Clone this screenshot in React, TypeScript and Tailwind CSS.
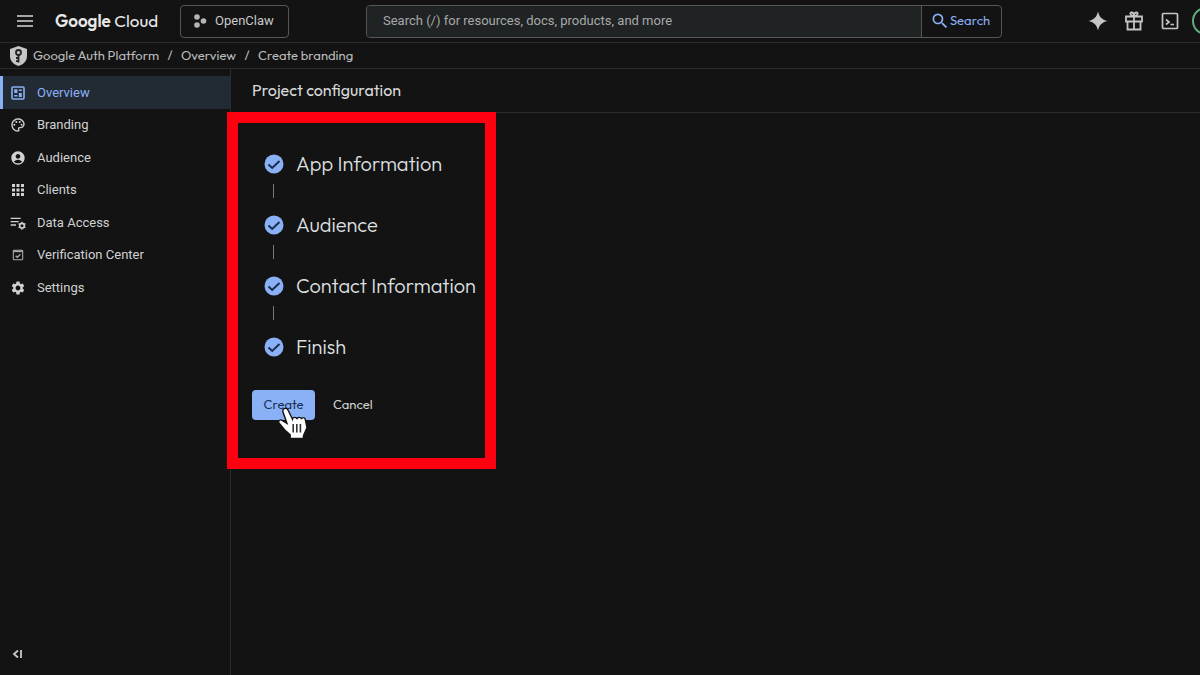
import type { ReactNode } from "react";
import {
  MdOutlinePalette,
  MdAccountCircle,
  MdApps,
  MdSettings,
  MdSearch,
} from "react-icons/md";

interface NavItem {
  label: string;
  icon: ReactNode;
}

const OverviewIcon = () => (
  <svg width="14" height="14" viewBox="0 0 14 14" fill="none" stroke="currentColor">
    <rect x="1" y="1" width="12" height="12" rx="1" strokeWidth="1.600" />
    <path d="M3.200 5.200h3.200M3.200 4h3.200M3.200 6.400h3.200M3.200 9.800h3.200M7.800 4.200h3M7.800 7.800h3M7.800 9.200h3M7.800 10.200h3" strokeWidth="1.400" />
  </svg>
);

const DataAccessIcon = () => (
  <svg width="16" height="16" viewBox="0 0 24 24" fill="none" stroke="currentColor" strokeWidth="2">
    <path d="M1 5h15M1 10h12M1 15h8" />
    <circle cx="18" cy="16" r="3.500" strokeWidth="2.400" />
    <path d="M18 10v2M18 20v2M12.800 13l1.800 1M21.400 18l1.800 1M12.800 19l1.800-1M21.400 14l1.800-1" />
  </svg>
);

const VerificationIcon = () => (
  <svg width="16" height="16" viewBox="0 0 24 24" fill="none" stroke="#a9aaab" strokeWidth="1.600">
    <rect x="5" y="5" width="14" height="14" rx="1" />
    <path d="M5 6.500h14" strokeWidth="2.500" />
    <path d="M8.500 13l2.500 2.500 4.500-4.500" strokeWidth="2" />
  </svg>
);

const NAV_ITEMS: NavItem[] = [
  { label: "Overview", icon: <OverviewIcon /> },
  { label: "Branding", icon: <MdOutlinePalette size={16} /> },
  { label: "Audience", icon: <MdAccountCircle size={16} /> },
  { label: "Clients", icon: <MdApps size={18} /> },
  { label: "Data Access", icon: <DataAccessIcon /> },
  { label: "Verification Center", icon: <VerificationIcon /> },
  { label: "Settings", icon: <MdSettings size={16} /> },
];

const STEPS = ["App Information", "Audience", "Contact Information", "Finish"];

function TopBar() {
  return (
    <header className="flex h-[43px] flex-shrink-0 items-center overflow-hidden border-b border-[#2b2c2d] pl-4">
      <button type="button" aria-label="Main menu" className="text-[#a4a5a6]">
        <svg width="18" height="14" viewBox="0 0 18 14" fill="none" stroke="currentColor" strokeWidth="2">
          <path d="M1 2h16M1 7h16M1 12h16" />
        </svg>
      </button>
      <a href="#" className="ml-[21px] w-[105px] whitespace-nowrap font-['Outfit','Lato',sans-serif] text-[17px] text-[#e8e8e8]">
        <span className="font-semibold">Google</span> Cloud
      </a>
      <button
        type="button"
        className="ml-5 flex h-[33px] w-[109px] flex-shrink-0 items-center gap-2 rounded border border-[#555657] pl-3 font-['Roboto',sans-serif] text-[13px] text-[#c8c9ca]"
      >
        <svg width="14" height="14" viewBox="0 0 14 14" fill="#b4b5b6">
          <circle cx="4" cy="3" r="2.800" />
          <circle cx="10.500" cy="7" r="2.800" />
          <circle cx="4" cy="11" r="2.800" />
        </svg>
        OpenClaw
      </button>
      <form className="ml-[77px] flex h-[33px] max-w-[636px] flex-1 rounded border border-[#555657]" onSubmit={(e) => e.preventDefault()}>
        <input
          type="search"
          aria-label="Search"
          placeholder="Search (/) for resources, docs, products, and more"
          className="min-w-0 flex-1 rounded-l bg-[#202324] px-4 font-['Roboto',sans-serif] text-[13px] text-[#c8c9ca] outline-none placeholder:text-[#a6a8a9]"
        />
        <button
          type="submit"
          className="flex w-20 items-center border-l border-[#555657] pl-2 font-['Outfit','Lato',sans-serif] text-[13px] text-[#8ab0f6]"
        >
          <MdSearch size={20} />
          Search
        </button>
      </form>
      <div className="-mr-5 ml-auto flex items-center gap-4 text-[#c4c5c6]">
        <button type="button" aria-label="Gemini">
          <svg width="20" height="20" viewBox="0 0 20 20" fill="currentColor">
            <path d="M10 .5c1.500 5.800 3.700 8 9.500 9.500-5.800 1.500-8 3.700-9.500 9.500C8.500 13.700 6.300 11.500.5 10 6.300 8.500 8.500 6.300 10 .5z" />
          </svg>
        </button>
        <button type="button" aria-label="Free trial">
          <svg width="20" height="20" viewBox="0 0 20 20" fill="none" stroke="currentColor" strokeWidth="1.800">
            <path d="M2 5.500h16v5H2zM3.500 10.500v8h13v-8M10 5.500v13M10 5C6 5 5.500 1.500 7.500 1.500 9 1.500 10 3 10 5c0-2 1-3.500 2.500-3.500C14.500 1.500 14 5 10 5" />
          </svg>
        </button>
        <button type="button" aria-label="Cloud Shell">
          <svg width="20" height="20" viewBox="0 0 20 20" fill="none" stroke="currentColor" strokeWidth="1.700">
            <rect x="2.500" y="2.500" width="15" height="15" rx="1" />
            <path d="M6 8.500l3 2.500-3 2.500M10.500 13.500H14" />
          </svg>
        </button>
        <button type="button" aria-label="Account" className="-ml-1 size-7 rounded-full border-2 border-[#5fae79]" />
      </div>
    </header>
  );
}

function Breadcrumbs() {
  return (
    <nav
      aria-label="Breadcrumb"
      className="flex h-[26px] flex-shrink-0 items-center border-b border-[#2b2c2d] pl-2.5 font-['Outfit','Lato',sans-serif] text-[13px] text-[#babbbc]"
    >
      <svg width="17" height="20" viewBox="0 0 17 20" className="mr-1.5">
        <path d="M8.500 0L17 3v7c0 5-3.500 8.500-8.500 10C3.500 18.500 0 15 0 10V3z" fill="#c5c6c7" />
        <circle cx="8.500" cy="6.500" r="2.500" fill="none" stroke="#202122" strokeWidth="1.800" />
        <path d="M8.500 9v7.500M8.500 12H6M8.500 15.200H6" fill="none" stroke="#202122" strokeWidth="1.800" />
      </svg>
      <a href="#">Google Auth Platform</a>
      <span className="w-[22px] text-center">/</span>
      <a href="#">Overview</a>
      <span className="w-[22px] text-center">/</span>
      <span aria-current="page">Create branding</span>
    </nav>
  );
}

function Sidebar() {
  return (
    <aside className="flex w-[231px] flex-shrink-0 flex-col border-r border-[#2b2c2d] pt-[7px]">
      <nav aria-label="Google Auth Platform">
        {NAV_ITEMS.map((item, i) => (
          <a
            key={item.label}
            href="#"
            className={`flex items-center border-l-3 font-['Roboto',sans-serif] text-[13px] ${
              i % 2 ? "h-8" : "h-[33px]"
            } ${i === 0 ? "border-[#8ab0f6] bg-[#222a33] text-[#8ab0f6]" : "border-transparent text-[#d0d1d2]"}`}
          >
            <span className="ml-1.5 flex w-[18px] justify-center">{item.icon}</span>
            <span className="ml-2.5">{item.label}</span>
          </a>
        ))}
      </nav>
      <button type="button" aria-label="Collapse menu" className="mb-4 ml-3 mt-auto w-3 text-[#c8c9ca]">
        <svg width="11" height="10" viewBox="0 0 11 10" fill="none" stroke="currentColor" strokeWidth="1.800">
          <path d="M6 1.500L2 5l4 3.500M9 1v8" />
        </svg>
      </button>
    </aside>
  );
}

function HandCursor() {
  return (
    <svg width="36" height="36" viewBox="0 0 30 30" className="pointer-events-none absolute left-[25px] top-4">
      <path
        d="M7 2c-1.800 0-2.500 1.500-2 3l3.300 9.500-4-2.500c-1.500-1-3.500 0-2.800 2l5 6 4.500 4v3h11V25l3-7-1.500-7c-.5-2-3-1.500-3 0-.5-2-3.500-2-3.800 0-.5-2-3.500-2-3.800 0L9.500 4C9 2.500 8.500 2 7 2z"
        fill="#fff"
        stroke="#161616"
        strokeWidth="1.200"
      />
      <path d="M13.500 15v7M16.500 15v7M19.500 15v7" stroke="#303030" strokeWidth="1.300" />
    </svg>
  );
}

function Stepper() {
  return (
    <ol className="flex flex-col gap-[13px]">
      {STEPS.map((step, i) => (
        <li key={step}>
          <div className="flex h-7 items-center gap-3 font-['Outfit','Lato',sans-serif] text-xl font-light text-[#dfe0e1]">
            <svg width="20" height="20" viewBox="0 0 20 20" className="flex-shrink-0">
              <circle cx="10" cy="10" r="9.500" fill="#8ab0f6" />
              <path d="M4.500 10.500l3.700 3.500L15.500 7" fill="none" stroke="#172c4d" strokeWidth="1.900" />
            </svg>
            <span className="whitespace-nowrap">{step}</span>
          </div>
          {i < STEPS.length - 1 && <div className="ml-[9px] mt-1.5 h-3.5 w-px bg-[#777879]" />}
        </li>
      ))}
    </ol>
  );
}

export default function App() {
  return (
    <div className="flex min-h-screen flex-col bg-[#131313]">
      <TopBar />
      <Breadcrumbs />
      <div className="flex flex-1">
        <Sidebar />
        <main className="min-w-0 flex-1">
          <h1 className="flex h-11 items-center border-b border-[#2b2c2d] pb-0.5 pl-[21px] font-['Outfit','Lato',sans-serif] text-base text-[#d8d9da]">
            Project configuration
          </h1>
          {/* Highlighted wizard area, overlapping the sidebar edge */}
          <section className="relative -ml-1 -mt-px w-[269px] border-[11px] border-[#ff0010] bg-[#131313] pb-[38px] pl-3.5 pt-[27px]">
            <div className="pl-3">
              <Stepper />
            </div>
            <div className="mt-[29px] flex items-center font-['Outfit','Lato',sans-serif] text-[13px]">
              <div className="relative">
                <button type="button" className="block h-[30px] w-[63px] rounded-sm bg-[#8ab0f6] text-[#1a3257]">
                  Create
                </button>
                <HandCursor />
              </div>
              <button type="button" className="ml-[18px] text-[#d0d1d2]">
                Cancel
              </button>
            </div>
          </section>
        </main>
      </div>
    </div>
  );
}
